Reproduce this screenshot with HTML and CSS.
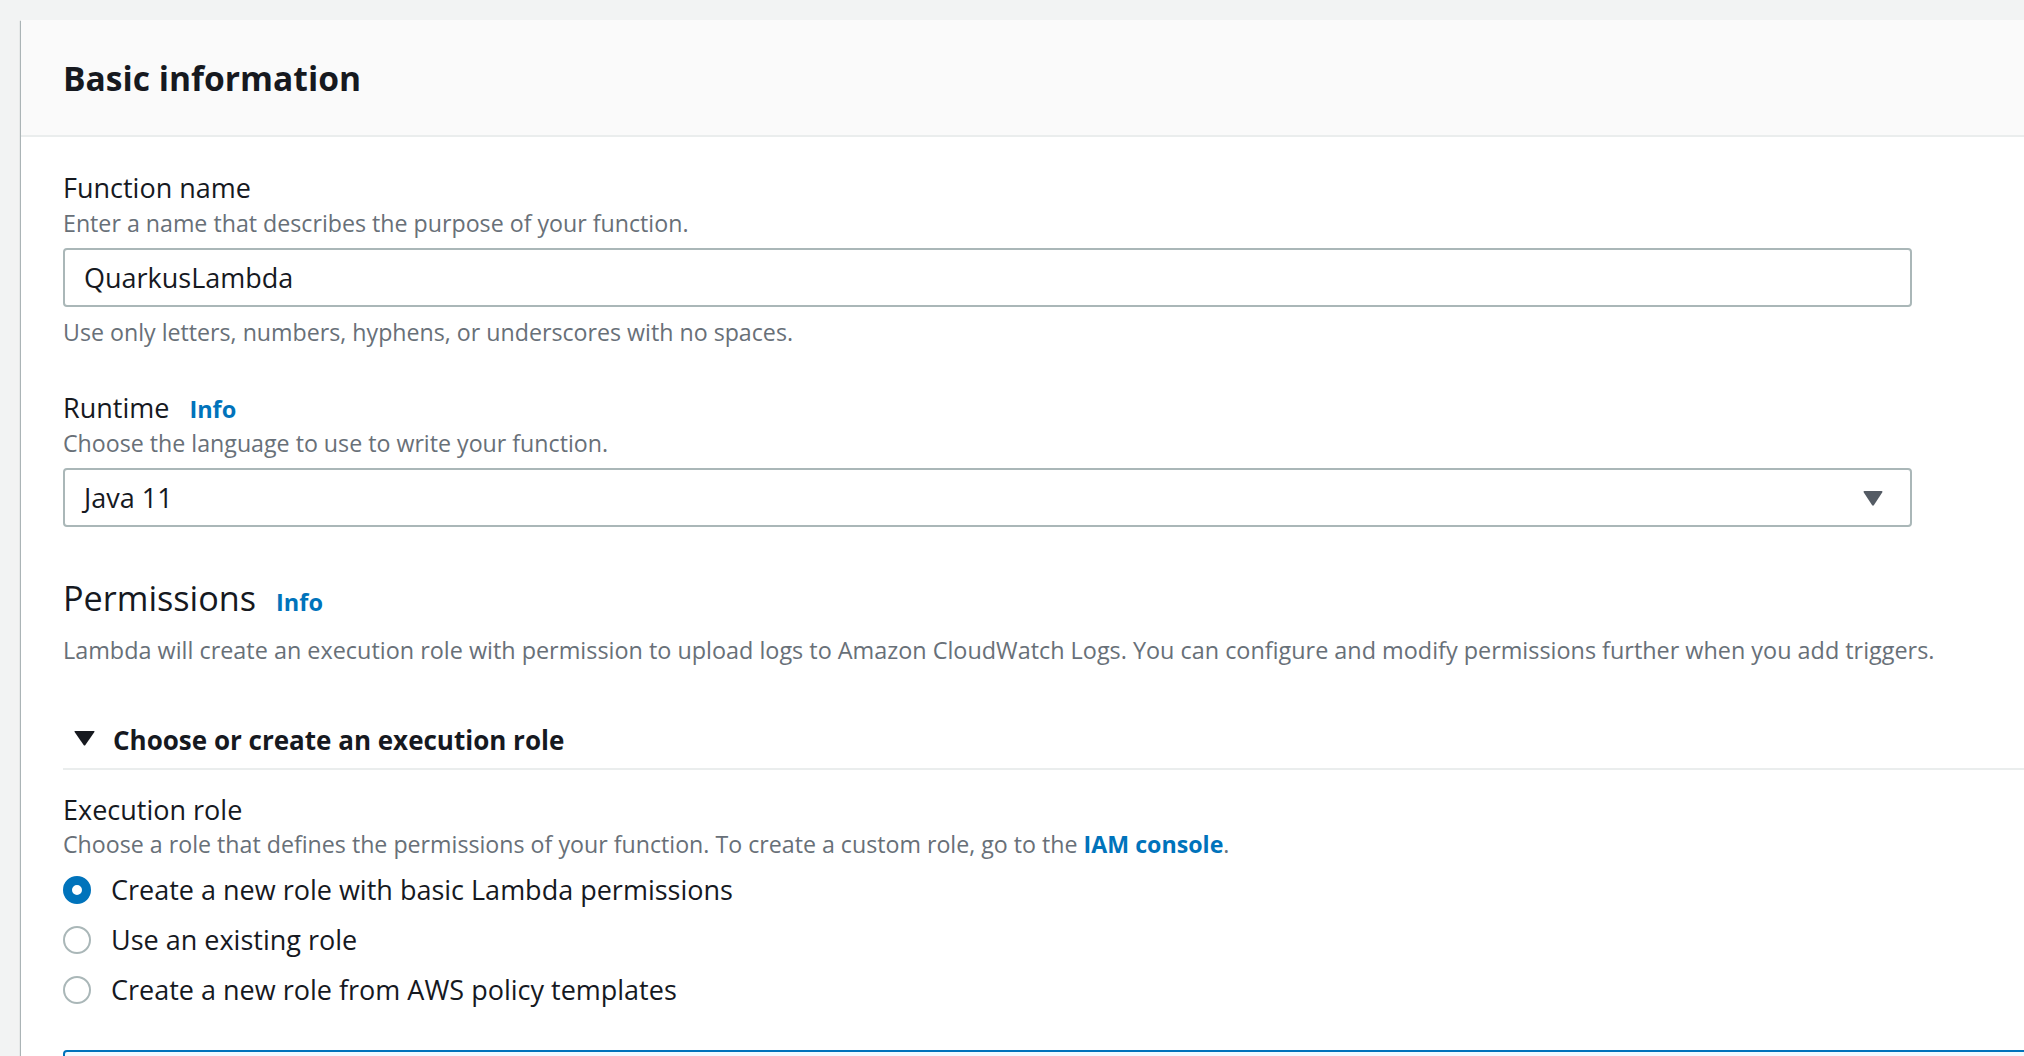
FILE: index.html
```html
<!DOCTYPE html>
<html lang="en">
<head>
<meta charset="utf-8">
<title>Basic information</title>
<link rel="stylesheet" href="styles.css">
</head>
<body>
<div class="page">
  <section class="card">
    <header class="card-header">
      <h2 class="card-title">Basic information</h2>
    </header>
    <div class="card-body">
      <div class="field">
        <div class="label">Function name</div>
        <div class="desc desc-tight">Enter a name that describes the purpose of your function.</div>
        <div class="control input">QuarkusLambda</div>
        <div class="desc hint">Use only letters, numbers, hyphens, or underscores with no spaces.</div>
      </div>

      <div class="field field-runtime">
        <div class="label-row">
          <span class="label">Runtime</span>
          <a class="info">Info</a>
        </div>
        <div class="desc desc-tight">Choose the language to use to write your function.</div>
        <div class="control select">
          <span>Java 11</span>
          <svg class="caret" width="20" height="16" viewBox="0 0 20 16"><path d="M1.5 1 H18.5 Q20 1 19.2 2.4 L11 15 Q10 16.4 9 15 L0.8 2.4 Q0 1 1.5 1 Z" fill="#545b64"/></svg>
        </div>
      </div>

      <div class="section-head">
        <h3 class="section-title">Permissions</h3>
        <a class="info info-lg">Info</a>
      </div>
      <div class="desc section-desc">Lambda will create an execution role with permission to upload logs to Amazon CloudWatch Logs. You can configure and modify permissions further when you add triggers.</div>

      <div class="expander">
        <svg class="exp-caret" width="21" height="15" viewBox="0 0 21 15"><path d="M1.2 0 H19.8 Q21 0 20.4 1.1 L11.2 14.2 Q10.5 15 9.8 14.2 L0.6 1.1 Q0 0 1.2 0 Z" fill="#16191f"/></svg>
        <span>Choose or create an execution role</span>
      </div>

      <div class="field field-role">
        <div class="label">Execution role</div>
        <div class="desc role-desc">Choose a role that defines the permissions of your function. To create a custom role, go to the <a class="link">IAM console</a>.</div>
        <div class="radios">
          <div class="radio-row"><span class="radio checked"></span><span>Create a new role with basic Lambda permissions</span></div>
          <div class="radio-row"><span class="radio"></span><span>Use an existing role</span></div>
          <div class="radio-row"><span class="radio"></span><span>Create a new role from AWS policy templates</span></div>
        </div>
      </div>

      <div class="notice"></div>
    </div>
  </section>
</div>
</body>
</html>
```

FILE: styles.css
```css
html, body {
  margin: 0;
  padding: 0;
  background: #f2f3f3;
  overflow: hidden;
  height: 1056px;
}

body {
  font-family: "Open Sans", "Noto Sans", "Liberation Sans", sans-serif;
  color: #16191f;
}

.page {
  padding: 20px 0 0 21px;
}

.card {
  background: #ffffff;
  margin-right: -60px;
  min-height: 1100px;
  box-shadow: -1px 1px 1px 0 rgba(0, 28, 36, 0.25), 0 1px 1px 0 rgba(0, 28, 36, 0.3);
}

.card-header {
  height: 115px;
  background: #fafafa;
  border-bottom: 2px solid #eaeded;
  display: flex;
  align-items: center;
  padding-left: 42px;
}

.card-title {
  margin: 0;
  font-size: 33.6px;
  font-weight: 700;
  line-height: 46px;
  color: #16191f;
}

.card-body {
  padding: 34px 0 0 42px;
}

.label {
  font-size: 27px;
  line-height: 34px;
  color: #16191f;
}

.label-row {
  display: flex;
  align-items: baseline;
}

.info {
  font-size: 23.5px;
  font-weight: 700;
  color: #0073bb;
  margin-left: 20px;
}

.info-lg {
  margin-left: 20px;
}

.desc {
  font-size: 23.2px;
  line-height: 30px;
  color: #687078;
}

.desc-tight {
  margin-top: 3px;
}

.control {
  box-sizing: border-box;
  width: 1849px;
  height: 59px;
  margin-top: 10px;
  border: 2px solid #aab7b8;
  border-radius: 4px;
  padding: 0 0 0 19px;
  font-size: 27px;
  line-height: 34px;
  color: #16191f;
  display: flex;
  align-items: center;
  background: #fff;
}

.select {
  justify-content: space-between;
  padding-right: 27px;
}

.caret {
  display: block;
}

.hint {
  margin-top: 10px;
}

.field-runtime {
  margin-top: 44px;
}

.section-head {
  display: flex;
  align-items: baseline;
  margin-top: 48px;
}

.section-title {
  margin: 0;
  font-size: 34.2px;
  line-height: 46px;
  font-weight: 400;
  color: #16191f;
}

.section-desc {
  margin-top: 14px;
  font-size: 23.4px;
}

.expander {
  margin-top: 57px;
  display: flex;
  align-items: center;
  font-size: 26px;
  line-height: 36px;
  font-weight: 700;
  padding: 0 0 10px 11px;
  border-bottom: 2px solid #eaeded;
}

.exp-caret {
  display: block;
  margin-right: 18px;
  margin-top: -4px;
}

.field-role {
  margin-top: 23px;
}

.role-desc {
  margin-top: 2px;
}

.link {
  color: #0073bb;
  font-weight: 700;
}

.radios {
  margin-top: 6px;
}

.radio-row {
  height: 50px;
  display: flex;
  align-items: center;
  font-size: 27px;
  line-height: 34px;
  color: #16191f;
}

.radio {
  box-sizing: border-box;
  width: 28px;
  height: 28px;
  border-radius: 50%;
  border: 2px solid #aab7b8;
  background: #fff;
  margin-right: 20px;
  flex: none;
}

.radio.checked {
  border: 9px solid #0073bb;
}

.notice {
  margin-top: 35px;
  height: 120px;
  border: 2px solid #0073bb;
  border-radius: 4px;
  background: #f1faff;
}
```
